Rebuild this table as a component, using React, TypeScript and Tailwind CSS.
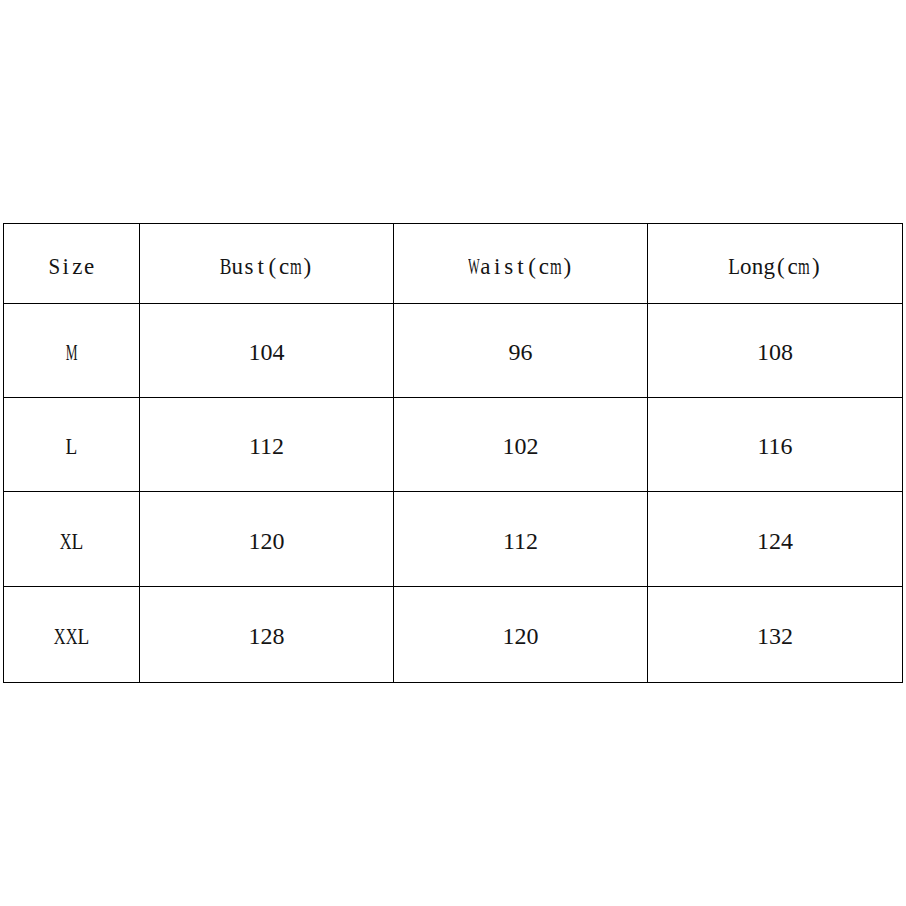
import React from "react";

const rows = [
  ["M", "104", "96", "108"],
  ["L", "112", "102", "116"],
  ["XL", "120", "112", "124"],
  ["XXL", "128", "120", "132"],
];
const heights = ["h-[94px]", "h-[94px]", "h-[95px]", "h-[96px]"];
const widths = ["w-[136px]", "w-[254px]", "w-[254px]", "w-[255px]"];

// Times/Liberation Serif advance widths (em)
const W: Record<string, number> = {
  M: 0.889, X: 0.722, L: 0.611, W: 0.944, B: 0.667, S: 0.556,
  m: 0.778, a: 0.444, i: 0.278, s: 0.389, t: 0.278, u: 0.5, c: 0.444,
  o: 0.5, n: 0.5, g: 0.5, z: 0.444, e: 0.444, "(": 0.333, ")": 0.333,
};

function HalfWidth({ text, size, cell }: { text: string; size: number; cell: number }) {
  return (
    <span className="inline-flex justify-center [font-family:'Liberation_Serif','Times_New_Roman',serif]">
      {text.split("").map((ch, i) => {
        const w = (W[ch] ?? 0.5) * size;
        const s = Math.min(1, cell / w);
        return (
          <span
            key={i}
            className="inline-flex justify-center overflow-visible"
            style={{ width: cell }}
          >
            <span className="inline-block origin-center" style={{ transform: `scaleX(${s})` }}>
              {ch}
            </span>
          </span>
        );
      })}
    </span>
  );
}

export default function App() {
  return (
    <div className="w-[906px] h-[906px] bg-white flex items-center justify-center">
      <table className="border-collapse w-[899px] table-fixed text-[#141414]">
        <thead>
          <tr className="h-[80px]">
            {["Size", "Bust(cm)", "Waist(cm)", "Long(cm)"].map((h, i) => (
              <th
                key={h}
                className={`${widths[i]} border border-black font-normal text-center align-middle pt-[5px] text-[23px] leading-none [font-family:'Liberation_Serif','Times_New_Roman',serif]`}
              >
                <HalfWidth text={h} size={23} cell={11.7} />
              </th>
            ))}
          </tr>
        </thead>
        <tbody>
          {rows.map((r, ri) => (
            <tr key={ri} className={heights[ri]}>
              {r.map((c, ci) => (
                <td
                  key={ci}
                  className="border border-black text-center align-middle pt-[3px] text-[24px] leading-none [font-family:'Liberation_Serif','Times_New_Roman',serif]"
                >
                  {ci === 0 ? <HalfWidth text={c} size={24} cell={11.8} /> : c}
                </td>
              ))}
            </tr>
          ))}
        </tbody>
      </table>
    </div>
  );
}
